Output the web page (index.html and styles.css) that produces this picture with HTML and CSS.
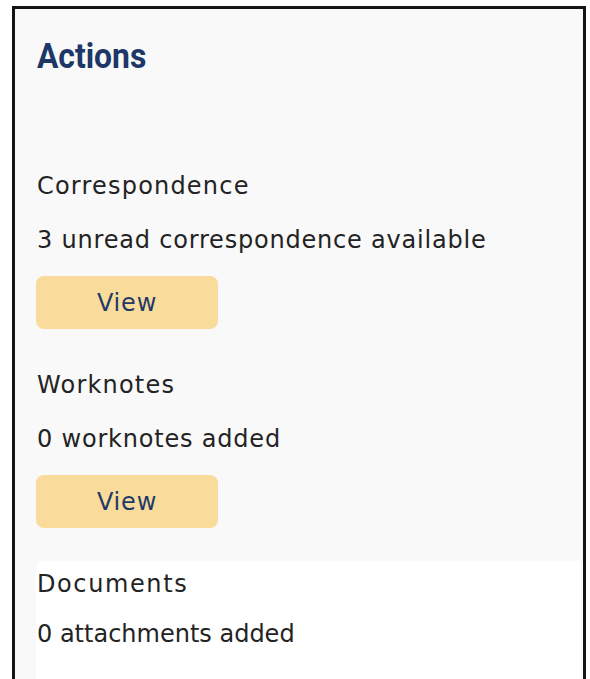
FILE: index.html
```html
<!DOCTYPE html>
<html lang="en">
<head>
<meta charset="utf-8">
<title>Actions</title>
<link rel="stylesheet" href="styles.css">
</head>
<body>
  <aside class="panel">
    <h2 class="panel-title"><span class="panel-title-text">Actions</span></h2>

    <section class="action">
      <h3 class="action-name">Correspondence</h3>
      <p class="action-meta">3 unread correspondence available</p>
      <button class="action-btn" type="button">View</button>
    </section>

    <section class="action action-next">
      <h3 class="action-name">Worknotes</h3>
      <p class="action-meta">0 worknotes added</p>
      <button class="action-btn" type="button">View</button>
    </section>

    <section class="action action-card">
      <h3 class="action-name">Documents</h3>
      <p class="action-meta action-meta-tight">0 attachments added</p>
    </section>
  </aside>
</body>
</html>
```

FILE: styles.css
```css
html, body {
  margin: 0;
  padding: 0;
  background: #ffffff;
  overflow: hidden;
}

.panel {
  box-sizing: border-box;
  width: 574px;
  min-height: 720px;
  margin: 6px 0 0 12px;
  padding: 28px 0 0 21px;
  border: 3px solid #141414;
  border-bottom: none;
  background: #f9f9f9;
  font-family: "DejaVu Sans", "Noto Sans", sans-serif;
  color: #232323;
}

.panel-title {
  margin: 0 0 94px;
  font-family: "Roboto", "Liberation Sans", sans-serif;
  font-weight: 700;
  font-size: 35px;
  line-height: 40px;
  color: #1c3768;
}

/* condensed look for the panel heading */
.panel-title-text {
  display: inline-block;
  transform: scaleX(0.91);
  transform-origin: left center;
  padding-left: 1px;
}

.action-name,
.action-meta {
  margin: 0;
  font-size: 24px;
  line-height: 30px;
  font-weight: 400;
  letter-spacing: 0.8px;
  padding-left: 1px;
}

.action-name {
  letter-spacing: 1.2px;
}

.action-card .action-name {
  letter-spacing: 1.6px;
}

.action-meta {
  margin-top: 24px;
}

.action-meta-tight {
  margin-top: 20px;
  letter-spacing: 0px;
}

.action-btn {
  display: block;
  box-sizing: border-box;
  width: 182px;
  height: 53px;
  margin-top: 21px;
  padding: 0;
  border: none;
  border-radius: 8px;
  background: #f9db9b;
  font-family: "DejaVu Sans", "Noto Sans", sans-serif;
  font-size: 24px;
  letter-spacing: 0.8px;
  color: #1f3a66;
}

.action-next {
  margin-top: 41px;
}

.action-card {
  margin: 33px 2px 0 0;
  padding-top: 8px;
  min-height: 140px;
  background: #ffffff;
  border-top-left-radius: 8px;
}
```
